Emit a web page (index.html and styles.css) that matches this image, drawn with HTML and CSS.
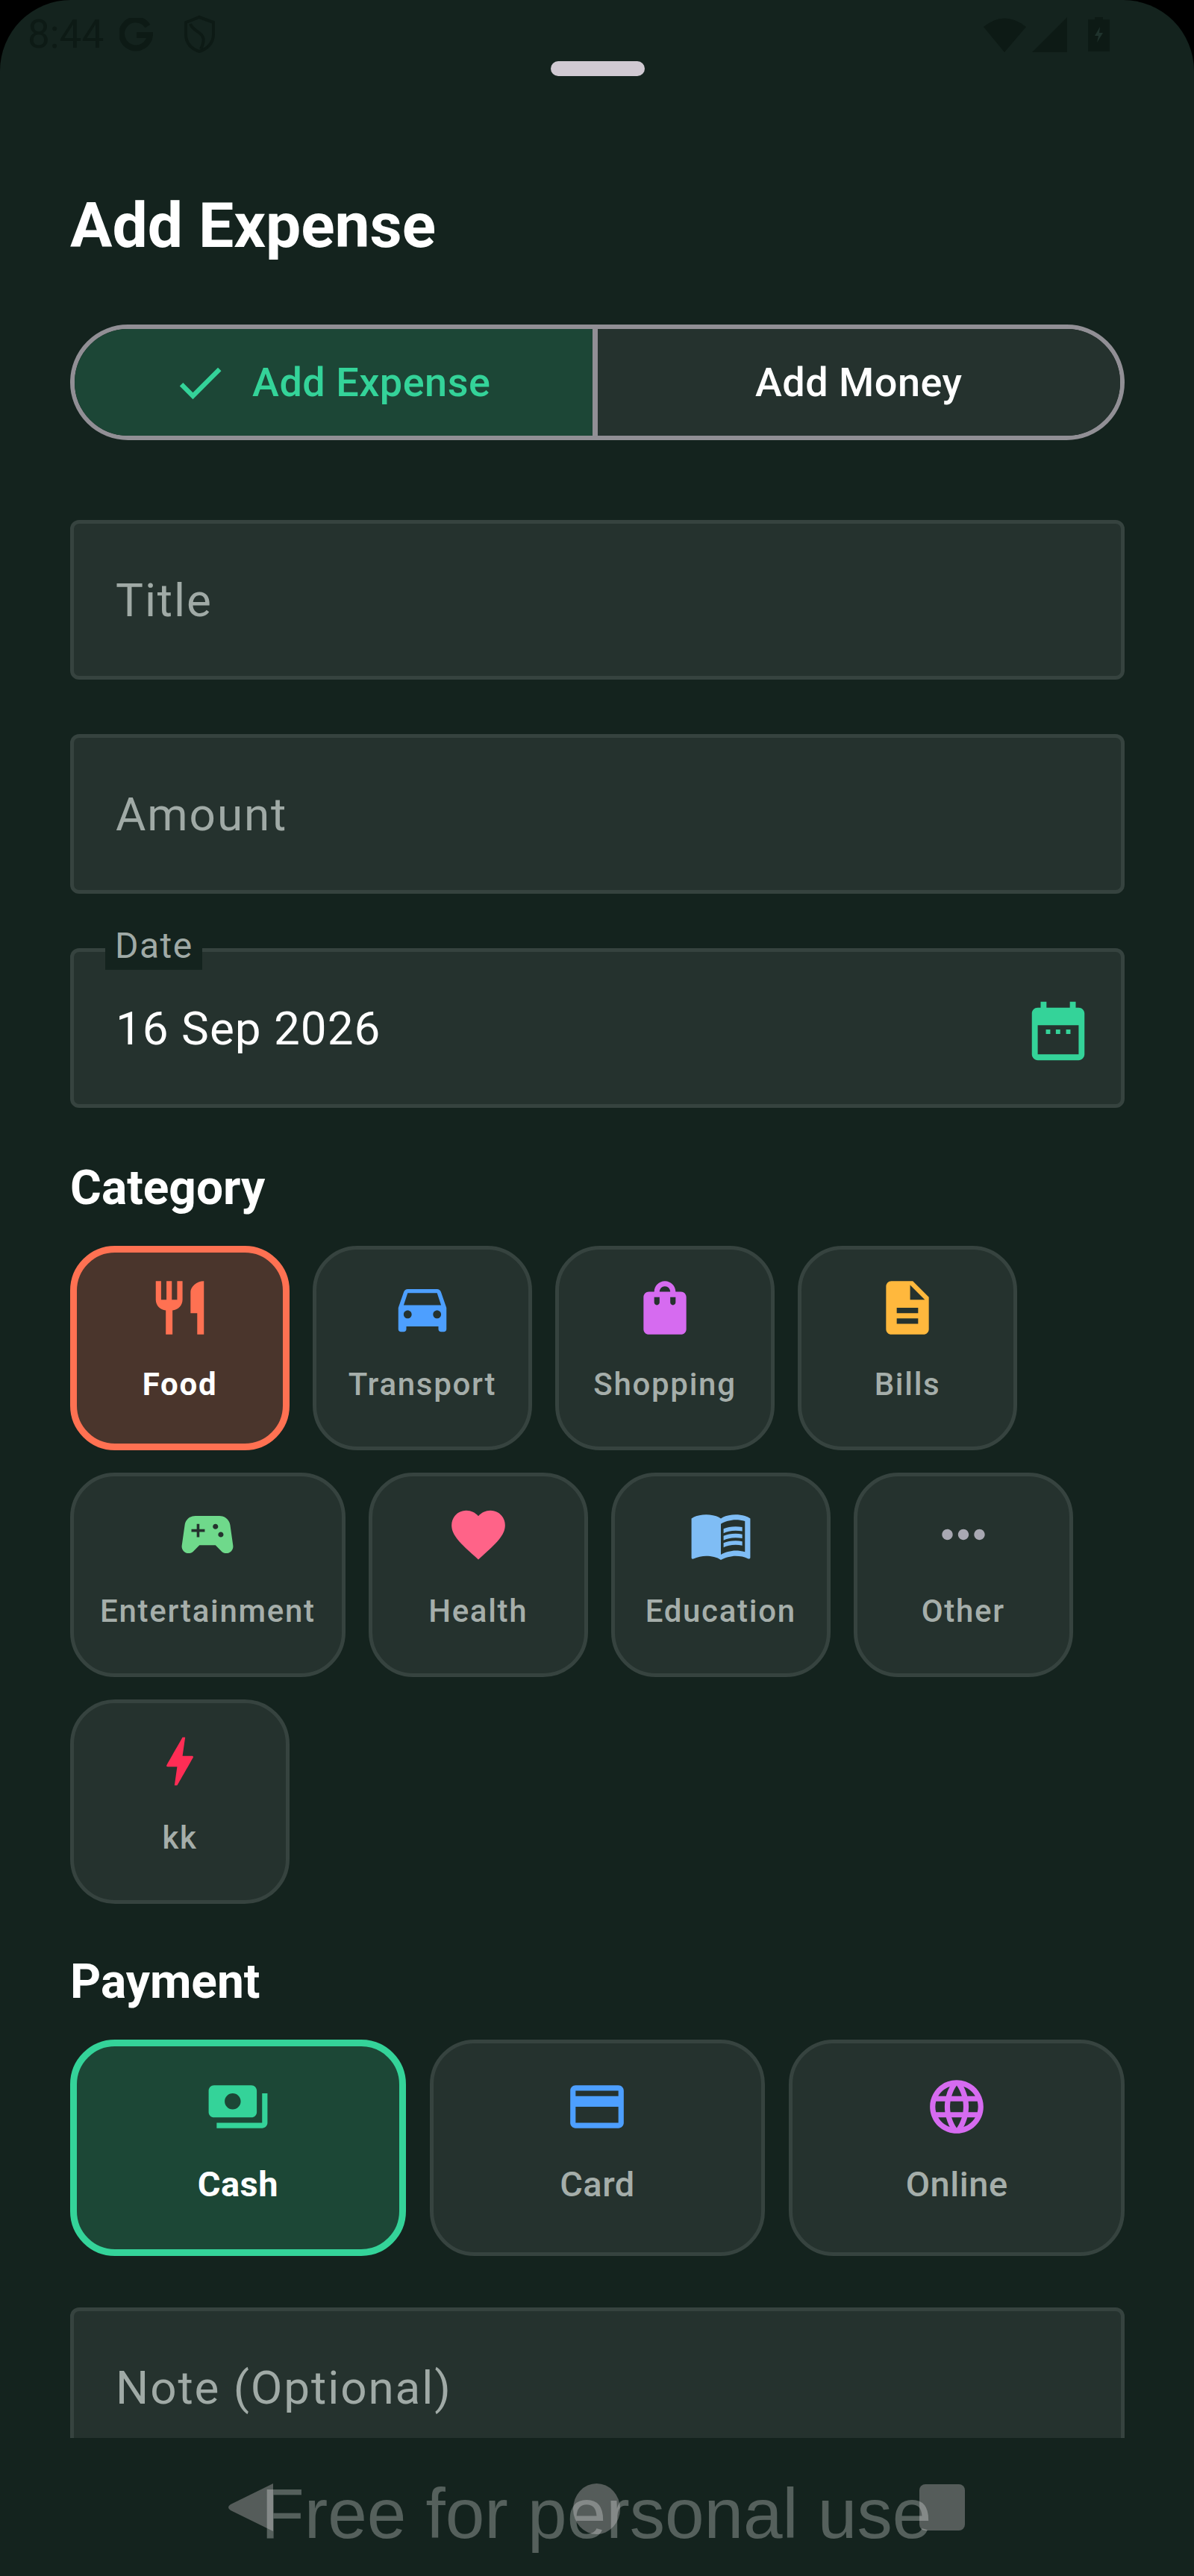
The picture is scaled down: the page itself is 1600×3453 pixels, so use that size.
FILE: index.html
```html
<!DOCTYPE html>
<html lang="en">
<head>
<meta charset="utf-8">
<title>Add Expense</title>
<link rel="stylesheet" href="styles.css">
</head>
<body>
<div class="screen">
  <div class="status">
    <div class="status-group">
      <span class="time">8:44</span>
      <svg class="st-g" viewBox="0 0 45 45"><path d="M38 11A19 19 0 1 0 41 23H23" fill="none" stroke="currentColor" stroke-width="8"/></svg>
      <svg class="st-shield" viewBox="0 0 45 52"><path d="M22 3L41 10V26C41 38 32 46 22 49C12 46 4 38 4 26V10Z" fill="none" stroke="currentColor" stroke-width="4"/><path d="M10 12C14 22 24 22 27 30C29 36 26 42 24 46" fill="none" stroke="currentColor" stroke-width="4"/></svg>
    </div>
    <div class="status-group status-right">
      <svg class="st-wifi" viewBox="0 0 57 48"><path d="M0 14Q28-9 57 14L28 48Z" fill="currentColor"/></svg>
      <svg class="st-signal" viewBox="0 0 47 47"><path d="M47 0V47H0Z" fill="currentColor"/></svg>
      <svg class="st-battery" viewBox="0 0 29 46"><path d="M9 0H20V3H29V46H0V3H9Z" fill="currentColor"/><path d="M16 13L9 25H14L12 34L20 21H15Z" fill="#1f322c"/></svg>
    </div>
  </div>

  <main class="sheet">
    <div class="grabber"></div>
    <h1 class="title">Add Expense</h1>

    <div class="toggle">
      <div class="seg seg-on">
        <svg class="check" viewBox="0 0 24 24"><path d="M9 16.17L4.83 12l-1.42 1.41L9 19 21 7l-1.41-1.41z"/></svg>
        <span>Add Expense</span>
      </div>
      <div class="seg seg-off"><span>Add Money</span></div>
    </div>

    <div class="fields">
      <div class="field"><span class="placeholder">Title</span></div>
      <div class="field"><span class="placeholder">Amount</span></div>
      <div class="field field-date">
        <span class="float-label">Date</span>
        <span class="value">16 Sep 2026</span>
        <svg class="calendar" viewBox="0 0 24 24"><path d="M19 4h-1V2h-2v2H8V2H6v2H5c-1.11 0-2 .9-2 2v14c0 1.1.89 2 2 2h14c1.1 0 2-.9 2-2V6c0-1.1-.9-2-2-2zm0 16H5V10h14v10z"/><path d="M7.8 11.5h1.5V13H7.8zM11.2 11.5h1.5V13h-1.5zM14.7 11.5h1.5V13h-1.5z"/></svg>
      </div>
    </div>

    <h2 class="section">Category</h2>
    <div class="chips">
      <div class="chip chip-food">
        <svg class="ic c-food" viewBox="0 0 24 24"><path d="M11 9H9V2H7v7H5V2H3v7c0 2.12 1.66 3.84 3.75 3.97V22h2.5v-9.03C11.34 12.84 13 11.12 13 9V2h-2v7zm5-3v8h2.5v8H21V2c-2.76 0-5 2.24-5 4z"/></svg>
        <span class="chip-label">Food</span>
      </div>
      <div class="chip">
        <svg class="ic c-blue" viewBox="0 0 24 24"><path d="M18.92 6.01C18.72 5.42 18.16 5 17.5 5h-11c-.66 0-1.21.42-1.42 1.01L3 12v8c0 .55.45 1 1 1h1c.55 0 1-.45 1-1v-1h12v1c0 .55.45 1 1 1h1c.55 0 1-.45 1-1v-8l-2.08-5.99zM6.5 16c-.83 0-1.5-.67-1.5-1.5S5.67 13 6.5 13s1.5.67 1.5 1.5S7.33 16 6.5 16zm11 0c-.83 0-1.5-.67-1.5-1.5s.67-1.5 1.5-1.5 1.5.67 1.5 1.5-.67 1.5-1.5 1.5zM5 11l1.5-4.5h11L19 11H5z"/></svg>
        <span class="chip-label">Transport</span>
      </div>
      <div class="chip">
        <svg class="ic c-purple" viewBox="0 0 24 24"><path d="M18 6h-2c0-2.21-1.79-4-4-4S8 3.79 8 6H6c-1.1 0-2 .9-2 2v12c0 1.1.9 2 2 2h12c1.1 0 2-.9 2-2V8c0-1.1-.9-2-2-2zm-8 4c0 .55-.45 1-1 1s-1-.45-1-1V8h2v2zm2-6c1.1 0 2 .9 2 2h-4c0-1.1.9-2 2-2zm4 6c0 .55-.45 1-1 1s-1-.45-1-1V8h2v2z"/></svg>
        <span class="chip-label">Shopping</span>
      </div>
      <div class="chip">
        <svg class="ic c-amber" viewBox="0 0 24 24"><path d="M14 2H6c-1.1 0-1.99.9-1.99 2L4 20c0 1.1.89 2 1.99 2H18c1.1 0 2-.9 2-2V8l-6-6zm2 16H8v-2h8v2zm0-4H8v-2h8v2zm-3-5V3.5L18.5 9H13z"/></svg>
        <span class="chip-label">Bills</span>
      </div>
      <div class="chip">
        <svg class="ic c-green" viewBox="0 0 24 24"><path d="M21.58 16.09l-1.09-7.66C20.21 6.46 18.52 5 16.53 5H7.47C5.48 5 3.79 6.46 3.51 8.43l-1.09 7.66C2.2 17.63 3.39 19 4.94 19c.68 0 1.32-.27 1.8-.75L9 16h6l2.25 2.25c.48.48 1.13.75 1.8.75 1.56 0 2.75-1.37 2.53-2.91zM11 11H9v2H8v-2H6v-1h2V8h1v2h2v1zm4-1c-.55 0-1-.45-1-1s.45-1 1-1 1 .45 1 1-.45 1-1 1zm2 3c-.55 0-1-.45-1-1s.45-1 1-1 1 .45 1 1-.45 1-1 1z"/></svg>
        <span class="chip-label">Entertainment</span>
      </div>
      <div class="chip">
        <svg class="ic c-pink" viewBox="0 0 24 24"><path d="M12 21.35l-1.45-1.32C5.4 15.36 2 12.28 2 8.5 2 5.42 4.42 3 7.5 3c1.74 0 3.41.81 4.5 2.09C13.09 3.81 14.76 3 16.5 3 19.58 3 22 5.42 22 8.5c0 3.78-3.4 6.86-8.55 11.54L12 21.35z"/></svg>
        <span class="chip-label">Health</span>
      </div>
      <div class="chip">
        <svg class="ic c-sky" viewBox="0 0 24 24"><path d="M21 5c-1.11-.35-2.33-.5-3.5-.5-1.95 0-4.05.4-5.5 1.5-1.45-1.1-3.55-1.5-5.5-1.5S2.45 4.9 1 6v14.65c0 .25.25.5.5.5.1 0 .15-.05.25-.05C3.1 20.45 5.05 20 6.5 20c1.95 0 4.05.4 5.5 1.5 1.35-.85 3.8-1.5 5.5-1.5 1.65 0 3.35.3 4.75 1.05.1.05.15.05.25.05.25 0 .5-.25.5-.5V6c-.6-.45-1.25-.75-2-1zm0 13.5c-1.1-.35-2.3-.5-3.5-.5-1.7 0-4.15.65-5.5 1.5V8c1.35-.85 3.8-1.5 5.5-1.5 1.2 0 2.4.15 3.5.5v11.5z"/><path d="M17.5 10.5c.88 0 1.73.09 2.5.26V9.24c-.79-.15-1.64-.24-2.5-.24-1.7 0-3.24.29-4.5.83v1.66c1.13-.64 2.7-.99 4.5-.99zM13 12.49v1.66c1.13-.64 2.7-.99 4.5-.99.88 0 1.73.09 2.5.26V11.9c-.79-.15-1.64-.24-2.5-.24-1.7 0-3.24.3-4.5.83zM17.5 14.33c-1.7 0-3.24.29-4.5.83v1.66c1.13-.64 2.7-.99 4.5-.99.88 0 1.73.09 2.5.26v-1.52c-.79-.16-1.64-.24-2.5-.24z"/></svg>
        <span class="chip-label">Education</span>
      </div>
      <div class="chip">
        <svg class="ic c-grey" viewBox="0 0 24 24"><path d="M6 10c-1.1 0-2 .9-2 2s.9 2 2 2 2-.9 2-2-.9-2-2-2zm12 0c-1.1 0-2 .9-2 2s.9 2 2 2 2-.9 2-2-.9-2-2-2zm-6 0c-1.1 0-2 .9-2 2s.9 2 2 2 2-.9 2-2-.9-2-2-2z"/></svg>
        <span class="chip-label">Other</span>
      </div>
      <div class="chip">
        <svg class="ic c-red" viewBox="0 0 24 24"><path d="M11 21h-1l1-7H7.5c-.58 0-.57-.32-.38-.66.19-.34.05-.08.07-.12C8.48 10.94 10.42 7.54 13 3h1l-1 7h3.5c.49 0 .56.33.47.51l-.07.15C12.96 17.55 11 21 11 21z"/></svg>
        <span class="chip-label">kk</span>
      </div>
    </div>

    <h2 class="section section-pay">Payment</h2>
    <div class="pay-row">
      <div class="pay pay-on">
        <svg class="ic c-mint" viewBox="0 0 24 24"><path d="M19 14V6c0-1.1-.9-2-2-2H3c-1.1 0-2 .9-2 2v8c0 1.1.9 2 2 2h14c1.1 0 2-.9 2-2zm-9-1c-1.66 0-3-1.34-3-3s1.34-3 3-3 3 1.34 3 3-1.34 3-3 3zm13-6v11c0 1.1-.9 2-2 2H4v-2h17V7h2z"/></svg>
        <span class="pay-label">Cash</span>
      </div>
      <div class="pay">
        <svg class="ic c-blue" viewBox="0 0 24 24"><path d="M20 4H4c-1.11 0-1.99.89-1.99 2L2 18c0 1.11.89 2 2 2h16c1.11 0 2-.89 2-2V6c0-1.11-.89-2-2-2zm0 14H4v-6h16v6zm0-10H4V6h16v2z"/></svg>
        <span class="pay-label">Card</span>
      </div>
      <div class="pay">
        <svg class="ic c-purple" viewBox="0 0 24 24"><path d="M11.99 2C6.47 2 2 6.48 2 12s4.47 10 9.99 10C17.52 22 22 17.52 22 12S17.52 2 11.99 2zm6.93 6h-2.95c-.32-1.25-.78-2.45-1.38-3.56 1.84.63 3.37 1.91 4.33 3.56zM12 4.04c.83 1.2 1.48 2.53 1.91 3.96h-3.82c.43-1.43 1.08-2.76 1.91-3.96zM4.26 14C4.1 13.36 4 12.69 4 12s.1-1.36.26-2h3.38c-.08.66-.14 1.32-.14 2 0 .68.06 1.34.14 2H4.26zm.82 2h2.95c.32 1.25.78 2.45 1.38 3.56-1.84-.63-3.37-1.9-4.33-3.56zm2.95-8H5.08c.96-1.66 2.49-2.93 4.33-3.56C8.81 5.55 8.35 6.75 8.03 8zM12 19.96c-.83-1.2-1.48-2.53-1.91-3.96h3.82c-.43 1.43-1.08 2.76-1.91 3.96zM14.34 14H9.66c-.09-.66-.16-1.32-.16-2 0-.68.07-1.35.16-2h4.68c.09.65.16 1.32.16 2 0 .68-.07 1.34-.16 2zm.25 5.56c.6-1.11 1.06-2.31 1.38-3.56h2.95c-.96 1.65-2.49 2.93-4.33 3.56zM16.36 14c.08-.66.14-1.32.14-2 0-.68-.06-1.34-.14-2h3.38c.16.64.26 1.31.26 2s-.1 1.36-.26 2h-3.38z"/></svg>
        <span class="pay-label">Online</span>
      </div>
    </div>

    <div class="field field-note"><span class="placeholder">Note (Optional)</span></div>
  </main>

  <nav class="navbar">
    <svg class="nav-back" viewBox="0 0 60 64"><path d="M60 0V64L3 36Q-3 32 3 28Z"/></svg>
    <span class="nav-home"></span>
    <span class="nav-recent"></span>
    <span class="watermark">Free for personal use</span>
  </nav>
</div>
</body>
</html>
```
FILE: styles.css
```css
* { box-sizing: border-box; }
html, body { margin: 0; padding: 0; background: #000; }
body { font-family: Roboto, "Noto Sans", sans-serif; }

.screen {
  width: 1600px;
  height: 3453px;
  display: flex;
  flex-direction: column;
  overflow: hidden;
  background: #14231e;
  border-radius: 95px 95px 0 0;
}

/* status bar */
.status {
  flex: none;
  height: 82px;
  padding: 20px 113px 0 37px;
  display: flex;
  justify-content: space-between;
  align-items: flex-start;
  color: #0d1a15;
}
.status-group { display: flex; align-items: center; height: 52px; }
.time { font-size: 53px; line-height: 52px; width: 123px; }
.st-g { width: 45px; height: 45px; }
.st-shield { width: 45px; height: 52px; margin-left: 40px; }
.st-wifi { width: 57px; height: 48px; }
.st-signal { width: 47px; height: 47px; margin-left: 8px; }
.st-battery { width: 29px; height: 46px; margin-left: 28px; }

/* sheet */
.sheet {
  flex: 1;
  min-height: 0;
  overflow: hidden;
  padding: 0 93px 0 94px;
}
.grabber {
  width: 126px;
  height: 20px;
  margin: 0 auto;
  border-radius: 10px;
  background: #d0c9d2;
}
.title {
  margin: 151px 0 0;
  font-size: 84px;
  line-height: 100px;
  font-weight: 700;
  color: #fff;
}

/* toggle */
.toggle {
  margin-top: 82px;
  height: 155px;
  display: grid;
  grid-template-columns: 1fr 1fr;
  border: 6px solid #918f95;
  border-radius: 78px;
  overflow: hidden;
}
.seg {
  display: flex;
  align-items: center;
  justify-content: center;
  font-size: 54px;
  font-weight: 500;
  letter-spacing: 0.5px;
}
.seg-on { background: #1c4636; color: #34d399; border-right: 7px solid #918f95; padding-right: 6px; }
.seg-off { background: #25322e; color: #fff; }
.check { width: 76px; height: 76px; margin-right: 32px; fill: #34d399; }

/* text fields */
.fields { margin-top: 107px; display: flex; flex-direction: column; gap: 73px; }
.field {
  position: relative;
  height: 214px;
  display: flex;
  align-items: center;
  justify-content: space-between;
  padding: 0 37px 0 56px;
  background: #25322e;
  border: 5px solid #36433f;
  border-radius: 12px;
  font-size: 62px;
  letter-spacing: 1.9px;
}
.placeholder { color: #a0aaa6; }
.value { color: #fff; letter-spacing: 1px; }
.float-label {
  position: absolute;
  left: 42px;
  top: -40px;
  padding: 0 12px 0 13px;
  background: #14231e;
  color: #a0aaa6;
  font-size: 48px;
  line-height: 64px;
  letter-spacing: 1.5px;
}
.calendar { width: 94px; height: 94px; margin-top: 8px; fill: #34d399; }
.field-note { margin-top: 69px; }

/* sections */
.section {
  margin: 73px 0 42px;
  font-size: 64px;
  line-height: 70px;
  font-weight: 700;
  color: #fff;
}
.section-pay { margin: 70px 0 42px; }

/* category chips */
.chips { display: flex; flex-wrap: wrap; gap: 30px 31px; }
.chip {
  min-width: 294px;
  height: 274px;
  padding: 35px 35px 0;
  display: flex;
  flex-direction: column;
  align-items: center;
  background: #25322e;
  border: 5px solid #36433f;
  border-radius: 60px;
}
.chip-food { background: #4a352c; border: 9px solid #ff7152; padding-top: 31px; }
.chip-food .chip-label { color: #fff; font-weight: 700; }
.ic { flex: none; width: 86px; height: 86px; fill: currentColor; }
.chip-label {
  margin-top: 30px;
  font-size: 42px;
  line-height: 60px;
  font-weight: 500;
  letter-spacing: 1.7px;
  color: #a5aeaa;
}

.c-food { color: #ff7152; }
.c-blue { color: #4d9fff; }
.c-purple { color: #d66bf0; }
.c-amber { color: #ffb83d; }
.c-green { color: #6fd98b; }
.c-pink { color: #ff6388; }
.c-sky { color: #7fbdf5; }
.c-grey { color: #a8a8b2; }
.c-red { color: #ff2d55; }
.c-mint { color: #34d399; }

/* payment */
.pay-row { display: grid; grid-template-columns: repeat(3, 1fr); gap: 32px; }
.pay {
  height: 290px;
  padding-top: 42px;
  display: flex;
  flex-direction: column;
  align-items: center;
  background: #25322e;
  border: 5px solid #36433f;
  border-radius: 60px;
}
.pay-on { background: #1c4736; border: 9px solid #34d399; padding-top: 38px; }
.pay-on .pay-label { color: #fff; font-weight: 700; font-size: 47px; }
.pay-label {
  margin-top: 31px;
  font-size: 47px;
  line-height: 60px;
  font-weight: 500;
  letter-spacing: 0.5px;
  color: #a5aeaa;
}

/* nav bar */
.navbar {
  position: relative;
  flex: none;
  height: 185px;
  padding: 0 307px 0 306px;
  display: flex;
  align-items: center;
  justify-content: space-between;
  background: #14231e;
}
.nav-back { width: 60px; height: 64px; fill: #555c5a; }
.nav-home { width: 63px; height: 68px; margin-top: 4px; border-radius: 50%; background: #555c5a; }
.nav-recent { width: 61px; height: 62px; border-radius: 8px; background: #555c5a; }
.watermark {
  position: absolute;
  left: 350px;
  top: 47px;
  font-family: "Liberation Sans", Arial, sans-serif;
  font-size: 94.5px;
  line-height: 108px;
  white-space: nowrap;
  color: rgba(255, 255, 255, 0.28);
}
```
